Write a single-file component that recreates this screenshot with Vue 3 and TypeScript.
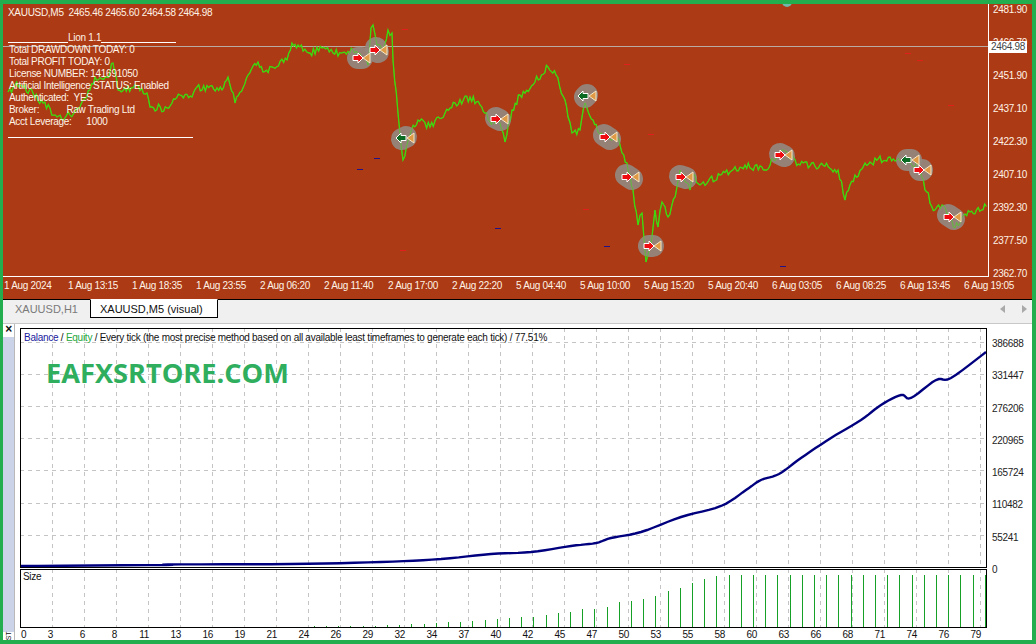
<script setup lang="ts">
type Pt = [number, number];

const PLOT_W = 985;
const PLOT_H = 272;

// price line key points, in page px minus the frame offset below
const keyPoints: Pt[] = [
  [8, 92], [15, 85], [20, 85], [33, 93], [43, 103], [57, 117], [65, 118], [80, 107], [90, 90], [95, 77], [107, 77],
  [113, 63], [118, 90], [133, 88], [147, 93], [150, 107], [167, 108], [180, 95], [192, 97], [197, 87], [222, 90],
  [228, 77], [235, 103], [248, 75], [258, 62], [263, 72], [287, 60], [292, 43], [298, 45], [310, 53], [322, 48],
  [333, 53], [353, 50], [368, 65], [371, 28], [373, 25], [377, 45], [383, 52], [388, 30], [392, 33], [393, 60],
  [398, 113], [403, 160], [410, 135], [418, 120], [430, 127], [450, 108], [470, 97], [480, 105], [490, 122],
  [498, 120], [505, 142], [512, 110], [520, 95], [535, 82], [548, 67], [556, 75], [565, 100], [568, 117],
  [572, 133], [580, 130], [585, 103], [593, 120], [603, 137], [617, 137], [627, 163], [633, 190], [638, 225],
  [642, 213], [646, 262], [652, 237], [655, 210], [658, 227], [662, 202], [668, 217], [677, 187], [680, 170],
  [690, 190], [693, 175], [700, 185], [720, 175], [745, 165], [765, 170], [782, 150], [800, 165], [820, 165],
  [838, 170], [845, 200], [855, 175], [870, 162], [890, 157], [905, 160], [918, 165], [925, 190], [935, 210],
  [942, 205], [955, 228], [970, 212], [988, 205],
];

function jitterLine(points: Pt[]): string {
  const out: string[] = [];
  for (let i = 0; i < points.length - 1; i++) {
    const [x0, y0] = points[i];
    const [x1, y1] = points[i + 1];
    const n = Math.max(1, Math.round(Math.abs(x1 - x0) / 1.7));
    for (let k = 0; k < n; k++) {
      const t = k / n;
      const x = x0 + (x1 - x0) * t;
      const noise = Math.sin(x * 12.9898 + i) * 43758.5453;
      const j = k === 0 ? 0 : (noise - Math.floor(noise) - 0.5) * 8;
      out.push(`${(x - 3).toFixed(1)},${(y0 + (y1 - y0) * t - 4 + j).toFixed(1)}`);
    }
  }
  return out.join(' ');
}
const priceLine = jitterLine(keyPoints);

const deals = [
  { x: 360, y: 58, dx: 2, dy: 0, buy: false },
  { x: 377, y: 50, dx: 1, dy: 2, buy: false },
  { x: 404, y: 138, dx: 2, dy: -1, buy: true },
  { x: 498, y: 119, dx: 2, dy: 1, buy: false },
  { x: 586, y: 96, dx: 1, dy: -1, buy: true },
  { x: 607, y: 137, dx: 3, dy: 2, buy: false },
  { x: 629, y: 177, dx: 3, dy: 2, buy: false },
  { x: 651, y: 246, dx: 2, dy: 0, buy: false },
  { x: 683, y: 177, dx: 3, dy: 1, buy: false },
  { x: 782, y: 155, dx: 2, dy: 1, buy: false },
  { x: 909, y: 160, dx: 2, dy: 0, buy: true },
  { x: 921, y: 170, dx: 1, dy: 0, buy: false },
  { x: 951, y: 217, dx: 3, dy: 2, buy: false },
];

const redDashes: Pt[] = [
  [908, 53], [920, 60], [951, 105], [586, 209], [651, 134], [405, 29], [403, 250], [627, 64],
];
const blueDashes: Pt[] = [[360, 169], [377, 158], [498, 228], [607, 246], [783, 266]];

const timeLabels = [
  '1 Aug 2024', '1 Aug 13:15', '1 Aug 18:35', '1 Aug 23:55', '2 Aug 06:20', '2 Aug 11:40', '2 Aug 17:00',
  '2 Aug 22:20', '5 Aug 04:40', '5 Aug 10:00', '5 Aug 15:20', '5 Aug 20:40', '6 Aug 03:05', '6 Aug 08:25',
  '6 Aug 13:45', '6 Aug 19:05',
];
const priceLabels = [
  '2481.90', '2466.70', '2451.90', '2437.10', '2422.30', '2407.10', '2392.30', '2377.50', '2362.70',
];
const infoLines = [
  'Total DRAWDOWN TODAY: 0',
  'Total PROFIT TODAY: 0',
  'License NUMBER: 141691050',
  'Artificial Intelligence STATUS: Enabled',
  'Authenticated:  YES',
  'Broker:           Raw Trading Ltd',
  'Acct Leverage:      1000',
];

// balance curve, page coordinates
const balance: Pt[] = [
  [20, 566], [165, 565], [167, 564.5], [290, 564], [380, 562], [440, 559], [490, 554], [530, 552], [570, 546],
  [595, 543], [610, 538], [640, 532], [680, 517], [720, 506], [745, 490], [760, 480], [778, 474], [800, 458],
  [830, 438], [860, 420], [880, 405], [900, 395], [910, 398], [935, 380], [950, 378], [985, 352],
];

function smooth(points: Pt[]): string {
  const out: string[] = [];
  for (let i = 0; i < points.length - 1; i++) {
    const p0 = points[Math.max(0, i - 1)];
    const p1 = points[i];
    const p2 = points[i + 1];
    const p3 = points[Math.min(points.length - 1, i + 2)];
    for (let k = 0; k < 6; k++) {
      const t = k / 6;
      const f = (a: number, b: number, c: number, d: number) =>
        0.5 * (2 * b + (c - a) * t + (2 * a - 5 * b + 4 * c - d) * t * t + (3 * b - a - 3 * c + d) * t * t * t);
      out.push(`${(f(p0[0], p1[0], p2[0], p3[0]) - 19).toFixed(1)},${(f(p0[1], p1[1], p2[1], p3[1]) - 328).toFixed(1)}`);
    }
  }
  const last = points[points.length - 1];
  out.push(`${last[0] - 19},${last[1] - 328}`);
  return out.join(' ');
}
const balanceLine = smooth(balance);

const gridX = Array.from({ length: 30 }, (_, i) => 32.5 + i * 32);
const gridY = [14.5, 46.5, 78.5, 110.5, 142.5, 175.5, 207.5];
const balanceTicks = ['386688', '331447', '276206', '220965', '165724', '110482', '55241', '0'];
const barLabels = [
  0, 3, 6, 8, 11, 13, 16, 19, 21, 24, 26, 29, 32, 34, 37, 40, 42, 45, 47, 50, 53, 55, 58, 60, 63, 66, 68, 71, 74, 76,
  79,
];

// size bars, left to right: tiny ones first, then rising to the full height
const rising = [
  1, 1, 1, 1, 1, 1, 2, 2, 3, 3, 4, 5, 5, 6, 7, 8, 9, 10, 10, 12, 14, 15, 18, 18, 20, 25, 26, 28, 31, 36, 39, 44, 48,
  51, 52,
];
const sizeBars = Array.from({ length: 56 }, (_, i) => ({
  x: 386 + (i - 6) * 12.2,
  h: i < rising.length ? rising[i] : 52,
}));
</script>

<template>
  <div class="frame">
    <section class="price">
      <div class="price-top">
        <svg class="plot" :width="PLOT_W" :height="PLOT_H" :viewBox="`0 0 ${PLOT_W} ${PLOT_H}`">
          <line x1="0" y1="42.5" :x2="PLOT_W" y2="42.5" stroke="#b9aaa4" />
          <polyline :points="priceLine" fill="none" stroke="#3fd810" stroke-width="1.3" />
          <circle cx="784" cy="-2" r="5" fill="#6fb7a8" />
          <line
            v-for="(d, i) in redDashes"
            :key="'r' + i"
            :x1="d[0] - 3 - 3"
            :y1="d[1] - 3.5"
            :x2="d[0] - 3 + 3"
            :y2="d[1] - 3.5"
            stroke="#e0201c"
          />
          <line
            v-for="(d, i) in blueDashes"
            :key="'b' + i"
            :x1="d[0] - 3 - 3"
            :y1="d[1] - 3.5"
            :x2="d[0] - 3 + 3"
            :y2="d[1] - 3.5"
            stroke="#20128a"
          />
          <line
            v-for="(d, i) in deals"
            :key="'c' + i"
            :x1="d.x - 3 - d.dx"
            :y1="d.y - 4 - d.dy"
            :x2="d.x - 3 + d.dx"
            :y2="d.y - 4 + d.dy"
            stroke="#94887f"
            stroke-opacity="0.92"
            stroke-width="22"
            stroke-linecap="round"
          />
          <polyline :points="priceLine" fill="none" stroke="#3fd810" stroke-width="1" stroke-opacity="0.55" />
          <g v-for="(d, i) in deals" :key="'d' + i" :transform="`translate(${d.x - 3} ${d.y - 4})`">
            <path d="M10 -5 V5 L3 0 Z" fill="#e09a45" stroke="#f6e7c8" stroke-width="1" />
            <path
              v-if="d.buy"
              d="M-8 0 L-3 -5 V-2.5 H2 V2.5 H-3 V5 Z"
              fill="#0a6a22"
              stroke="#fff"
              stroke-width="1"
            />
            <path v-else d="M3 0 L-2 -5 V-2.5 H-7 V2.5 H-2 V5 Z" fill="#ee0c10" stroke="#fff" stroke-width="1" />
          </g>
        </svg>
        <div class="price-axis">
          <span v-for="p in priceLabels" :key="p" class="price-label">{{ p }}</span>
        </div>
      </div>
      <div class="time-axis">
        <span v-for="t in timeLabels" :key="t" class="time-label">{{ t }}</span>
      </div>

      <div class="info">
        <div class="symbol">XAUUSD,M5&nbsp;&nbsp;2465.46 2465.60 2464.58 2464.98</div>
        <div class="lion"><i class="rule r1"></i>Lion 1.1<i class="rule r2"></i></div>
        <div v-for="l in infoLines" :key="l" class="info-line">{{ l }}</div>
        <i class="rule r3"></i>
      </div>
      <div class="last-price">2464.98</div>
    </section>

    <nav class="tabs">
      <span class="tab">XAUUSD,H1</span>
      <span class="tab active">XAUUSD,M5 (visual)</span>
      <span class="spacer"></span>
      <svg width="30" height="10" viewBox="0 0 30 10">
        <path d="M6 1 L1 5 L6 9 Z M23 1 L28 5 L23 9 Z" fill="#a9a9a9" />
      </svg>
    </nav>

    <section class="tester">
      <aside class="strip">
        <span class="close">×</span>
        <span class="strip-body"></span>
        <span class="strip-label">ST</span>
      </aside>
      <div class="tester-main">
        <div class="graph-row">
          <div class="graph">
            <svg width="967" height="240" viewBox="0 0 967 240">
              <line
                v-for="x in gridX"
                :key="x"
                :x1="x"
                y1="0"
                :x2="x"
                y2="240"
                stroke="#c4c4c4"
                stroke-dasharray="4 4"
              />
              <line
                v-for="y in gridY"
                :key="y"
                x1="0"
                :y1="y"
                x2="967"
                :y2="y"
                stroke="#c4c4c4"
                stroke-dasharray="4 4"
              />
              <polyline :points="balanceLine" fill="none" stroke="#00007f" stroke-width="2.4" />
              <rect x="0.5" y="0.5" width="966" height="239" fill="none" stroke="#000" />
            </svg>
            <div class="legend">
              <span class="blue">Balance</span> / <span class="green">Equity</span> / Every tick (the most precise
              method based on all available least timeframes to generate each tick) / 77.51%
            </div>
            <div class="watermark">EAFXSRTORE.COM</div>
          </div>
          <div class="balance-axis">
            <span v-for="t in balanceTicks" :key="t">{{ t }}</span>
          </div>
        </div>
        <div class="graph size-graph">
          <svg width="967" height="59" viewBox="0 0 967 59">
            <line
              v-for="x in gridX"
              :key="x"
              :x1="x"
              y1="0"
              :x2="x"
              y2="59"
              stroke="#c4c4c4"
              stroke-dasharray="4 4"
            />
            <line
              v-for="(b, i) in sizeBars"
              :key="i"
              :x1="Math.round(b.x - 19) + 0.5"
              :y1="58 - b.h"
              :x2="Math.round(b.x - 19) + 0.5"
              y2="58"
              stroke="#16a025"
            />
            <rect x="0.5" y="0.5" width="966" height="58" fill="none" stroke="#000" />
          </svg>
          <div class="size-label">Size</div>
        </div>
        <div class="bar-axis">
          <span v-for="n in barLabels" :key="n">{{ n }}</span>
        </div>
      </div>
    </section>
  </div>
</template>

<style scoped>
.frame {
  width: 1036px;
  height: 644px;
  box-sizing: border-box;
  border: solid #22ad4e;
  border-width: 4px 4px 4px 3px;
  display: flex;
  flex-direction: column;
  background: #fff;
  overflow: hidden;
  font-family: "Liberation Sans", Arial, sans-serif;
  font-size: 10px;
  letter-spacing: -0.3px;
  color: #111;
}

.price {
  position: relative;
  height: 295px;
  flex: none;
  background: #ab3a15;
  color: #fff3e6;
}
.price-top {
  display: flex;
  height: 273px;
}
.plot {
  display: block;
  flex: none;
  border-right: 1px solid #fff;
  border-bottom: 1px solid #fff;
}
.price-axis {
  display: flex;
  flex-direction: column;
  padding-left: 4px;
}
.price-label {
  flex: none;
  height: 33px;
  line-height: 11px;
  white-space: nowrap;
}
.time-axis {
  display: flex;
  padding-top: 3px;
}
.time-label {
  flex: none;
  width: 64px;
  padding-left: 1px;
  box-sizing: border-box;
  line-height: 12px;
  white-space: nowrap;
}

.info {
  position: absolute;
  left: 5px;
  top: 3px;
  color: #fff3e6;
  line-height: 12px;
  white-space: pre;
}
.symbol {
  margin-bottom: 13px;
}
.lion {
  display: flex;
  align-items: flex-end;
}
.info-line {
  margin-left: 1px;
}
.rule {
  display: block;
  height: 1px;
  background: #fff;
}
.r1 {
  width: 60px;
  margin-bottom: 1px;
}
.r2 {
  width: 75px;
  margin-bottom: 1px;
}
.r3 {
  width: 185px;
  margin-top: 9px;
}
.last-price {
  position: absolute;
  left: 986px;
  top: 37px;
  width: 38px;
  height: 12px;
  line-height: 12px;
  text-align: center;
  background: #fff;
  color: #444;
}

.tabs {
  flex: none;
  height: 25px;
  display: flex;
  align-items: flex-start;
  box-sizing: border-box;
  background: #f0f0f0;
  border-top: 1px solid #000;
  border-bottom: 1px solid #c8c8c8;
  padding-right: 3px;
  font-size: 11px;
  letter-spacing: 0;
}
.tab {
  height: 18px;
  line-height: 18px;
  padding: 0 12px;
  color: #7a7a7a;
  white-space: nowrap;
}
.tab.active {
  box-sizing: border-box;
  width: 128px;
  margin-top: -1px;
  height: 19px;
  line-height: 18px;
  padding: 0 9px;
  background: #fff;
  color: #111;
  border: 1px solid #000;
  border-top: 1px solid #fff;
}
.spacer {
  flex: 1;
}
.tabs svg {
  margin-top: 4px;
}

.tester {
  flex: 1;
  display: flex;
  min-height: 0;
}
.strip {
  flex: none;
  width: 11px;
  margin-right: 5px;
  display: flex;
  flex-direction: column;
  background: #fff;
  border-right: 1px solid #b9b9b9;
}
.close {
  height: 13px;
  line-height: 11px;
  font-weight: bold;
  font-size: 12px;
  text-align: center;
}
.strip-body {
  flex: 1;
  background: #cbd3e8;
}
.strip-label {
  height: 8px;
  font-size: 7px;
  line-height: 8px;
  text-align: center;
  transform: rotate(-90deg);
}
.tester-main {
  display: flex;
  flex-direction: column;
  padding-top: 4px;
  min-width: 0;
}
.graph-row {
  display: flex;
  height: 240px;
  flex: none;
}
.graph {
  position: relative;
  width: 967px;
  flex: none;
}
.graph svg {
  display: block;
}
.legend {
  position: absolute;
  left: 4px;
  top: 3px;
  white-space: nowrap;
  line-height: 13px;
  letter-spacing: -0.26px;
  color: #111;
}
.blue {
  color: #1a1a9e;
}
.green {
  color: #25a83c;
}
.watermark {
  position: absolute;
  left: 26px;
  top: 26px;
  font-family: "Open Sans", sans-serif;
  font-weight: 700;
  font-size: 27.2px;
  letter-spacing: 0;
  line-height: 38px;
  color: #2fae5e;
  white-space: nowrap;
}
.balance-axis {
  display: flex;
  flex-direction: column;
  padding-left: 5px;
  padding-top: 10px;
  color: #222;
}
.balance-axis span {
  flex: none;
  height: 32.3px;
  line-height: 12px;
}
.size-graph {
  margin-top: 1px;
  height: 59px;
  flex: none;
}
.size-label {
  position: absolute;
  left: 3px;
  top: 2px;
  line-height: 12px;
}
.bar-axis {
  display: flex;
  padding-top: 1px;
  line-height: 12px;
}
.bar-axis span {
  flex: none;
  width: 32px;
  text-align: right;
}
.bar-axis span:first-child {
  width: 1px;
  padding-left: 1px;
  box-sizing: border-box;
  text-align: left;
}
</style>

<style>
html,
body {
  margin: 0;
  background: #fff;
}
</style>
